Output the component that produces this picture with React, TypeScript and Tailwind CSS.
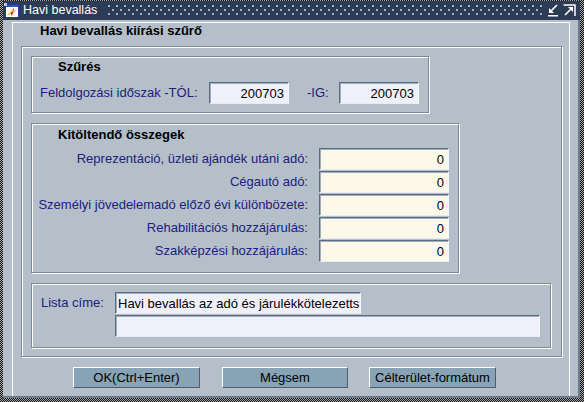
import React from "react";

const inputBase =
  "h-[22px] border border-t-[#5b6b80] border-l-[#5b6b80] border-r-[#f6f8fa] border-b-[#e8ecf0] shadow-[inset_1px_1px_0_#a3aebb] flex items-center text-[13px] text-black leading-none overflow-hidden whitespace-nowrap";

function Field({
  className,
  value,
  right,
}: {
  className: string;
  value?: string;
  right?: boolean;
}) {
  return (
    <div className={`${inputBase} ${className} ${right ? "justify-end pr-[4px]" : "pl-[2px]"}`}>
      {value}
    </div>
  );
}

function Btn({ className, label }: { className: string; label: string }) {
  return (
    <div
      className={`h-[21px] ${className} bg-[#88a2b6] border border-t-white border-l-white border-r-[#4d5d6e] border-b-[#4d5d6e] flex items-center justify-center text-[13px] font-normal text-black leading-none`}
    >
      {label}
    </div>
  );
}

const etched =
  "border border-[#7f8a97] shadow-[inset_1px_1px_0_#ffffff,1px_1px_0_#ffffff]";

export default function App() {
  const rows = [
    "Reprezentáció, üzleti ajándék utáni adó:",
    "Cégautó adó:",
    "Személyi jövedelemadó előző évi különbözete:",
    "Rehabilitációs hozzájárulás:",
    "Szakképzési hozzájárulás:",
  ];
  return (
    <div className="w-[584px] h-[402px] overflow-hidden font-['Liberation_Sans',Arial,sans-serif] [background-image:repeating-conic-gradient(#111_0%_25%,#a8a8a8_0%_50%)] [background-size:2px_2px] pt-[1px] pl-[3px] pr-[4px] pb-[4px] flex flex-col">
      {/* Title bar */}
      <div className="h-[19px] bg-[#2c3b56] flex items-center pl-[1px] pr-[4px] shrink-0">
        <svg width="16" height="16" viewBox="0 0 16 16" className="shrink-0">
          <rect x="1.5" y="1.5" width="13" height="13" fill="#ffffff" stroke="#2838a8" strokeWidth="1" />
          <rect x="2" y="2" width="12" height="2" fill="#3050c8" />
          <path d="M3 13 L10 5 L10 8.5 L13.5 5.5 L7 13 L7 10 Z" fill="#e02828" />
          <path d="M4.5 12 L9 7 L9 9.5 L11.5 7.5" stroke="#f8e028" strokeWidth="1" fill="none" />
          <rect x="0" y="0" width="3" height="3" fill="#c0c8d8" />
        </svg>
        <span className="ml-[3px] text-white text-[12.5px] leading-none whitespace-nowrap">
          Havi bevallás
        </span>
        <div className="ml-[10px] mr-[4px] flex-1 h-[13px] bg-[radial-gradient(circle_at_2px_2px,#a6b2c4_1px,transparent_1.5px),radial-gradient(circle_at_6px_6px,#a6b2c4_1px,transparent_1.5px)] bg-[length:8px_8px]" />
        <svg width="12" height="13" viewBox="0 0 12 13" className="shrink-0">
          <path d="M10 1 L3.5 7.5" stroke="#fff" strokeWidth="1.6" />
          <path d="M2 4 L2 9 L7 9 Z" fill="#fff" />
          <rect x="1" y="11" width="10" height="1.5" fill="#fff" />
        </svg>
        <svg width="13" height="13" viewBox="0 0 13 13" className="ml-[4px] shrink-0">
          <path d="M0.5 1 L12 1 L12 12" stroke="#fff" strokeWidth="1.5" fill="none" />
          <path d="M2 11 L7.5 5.5" stroke="#fff" strokeWidth="1.6" />
          <path d="M10 3 L10 8 L5 3 Z" fill="#fff" />
        </svg>
      </div>

      {/* Body */}
      <div className="flex-1 bg-[#b5bfc9] border-r-2 border-b-2 border-[#6c7c8f] pl-[9px] pt-[2px] pr-[8px] flex">
        <div className="flex-1 border-l border-t border-r border-white flex flex-col">
          <div className="h-[23px] pl-[27px] pt-[1px] font-bold text-[13px] leading-[14px] text-black whitespace-nowrap">
            Havi bevallás kiírási szűrő
          </div>

          {/* Outer group */}
          <div className={`ml-[8px] w-[541px] h-[311px] ${etched} pl-[9px] pt-[9px] flex flex-col`}>
            {/* Szűrés */}
            <div className={`w-[398px] h-[57px] ${etched} flex flex-col`}>
              <div className="pl-[26px] pt-[3px] h-[25px] font-bold text-[13px] leading-[14px] text-black">
                Szűrés
              </div>
              <div className="flex items-center pl-[8px]">
                <span className="w-[169px] text-[13px] text-[#20207e] whitespace-nowrap">
                  Feldolgozási időszak -TÓL:
                </span>
                <Field className="w-[80px] bg-[#eef0fc]" value="200703" right />
                <span className="ml-[18px] w-[32px] text-[13px] text-[#20207e]">-IG:</span>
                <Field className="w-[80px] bg-[#eef0fc]" value="200703" right />
              </div>
            </div>

            {/* Kitöltendő összegek */}
            <div className={`mt-[10px] w-[428px] h-[150px] ${etched} flex flex-col`}>
              <div className="pl-[26px] pt-[4px] h-[24px] font-bold text-[13px] leading-[14px] text-black whitespace-nowrap">
                Kitöltendő összegek
              </div>
              <div className="flex flex-col pr-[9px]">
                {rows.map((r) => (
                  <div key={r} className="h-[23px] flex items-start justify-end">
                    <span className="h-[22px] flex items-center text-[13px] text-[#20207e] whitespace-nowrap">
                      {r}
                    </span>
                    <Field className="ml-[11px] w-[130px] bg-[#fdf9ea]" value="0" right />
                  </div>
                ))}
              </div>
            </div>

            {/* Lista címe */}
            <div className={`mt-[10px] w-[520px] h-[65px] ${etched} pl-[9px] pt-[8px] flex flex-col`}>
              <div className="flex items-center">
                <span className="w-[74px] text-[13px] text-[#20207e] whitespace-nowrap">Lista címe:</span>
                <Field
                  className="w-[246px] bg-[#eef0fc]"
                  value="Havi bevallás az adó és járulékkötelezetts"
                />
              </div>
              <Field className="mt-[1px] ml-[74px] w-[425px] bg-[#eef0fc]" />
            </div>
          </div>

          {/* Buttons */}
          <div className="mt-[10px] ml-[60px] flex">
            <Btn className="w-[127px]" label="OK(Ctrl+Enter)" />
            <Btn className="ml-[22px] w-[126px]" label="Mégsem" />
            <Btn className="ml-[21px] w-[127px]" label="Célterület-formátum" />
          </div>
        </div>
      </div>
    </div>
  );
}
